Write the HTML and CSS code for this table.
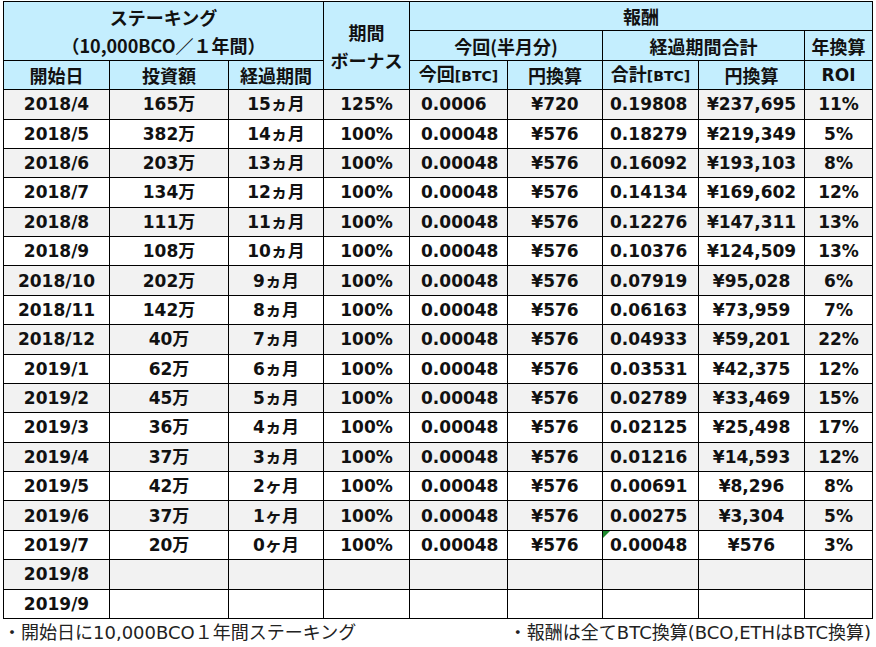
FILE: index.html
```html
<!DOCTYPE html>
<html lang="ja">
<head>
<meta charset="utf-8">
<link rel="stylesheet" href="styles.css">
</head>
<body>
<div class="page">
<table class="grid">
  <colgroup>
    <col class="c1"><col class="c2"><col class="c3"><col class="c4"><col class="c5"><col class="c6"><col class="c7"><col class="c8"><col class="c9">
  </colgroup>
  <thead>
    <tr>
      <th colspan="3" rowspan="2" class="stake"><div>ステーキング</div><div>（10,000BCO／１年間）</div></th>
      <th rowspan="3" class="bonus"><div>期間</div><div>ボーナス</div></th>
      <th colspan="5">報酬</th>
    </tr>
    <tr>
      <th colspan="2">今回(半月分)</th>
      <th colspan="2">経過期間合計</th>
      <th>年換算</th>
    </tr>
    <tr>
      <th>開始日</th>
      <th>投資額</th>
      <th>経過期間</th>
      <th>今回<span class="sm">[BTC]</span></th>
      <th>円換算</th>
      <th>合計<span class="sm">[BTC]</span></th>
      <th>円換算</th>
      <th class="roi">ROI</th>
    </tr>
  </thead>
  <tbody>
    <tr class="g"><td>2018/4</td><td>165万</td><td>15ヵ月</td><td>125%</td><td class="l">0.0006</td><td>¥720</td><td class="t">0.19808</td><td>¥237,695</td><td>11%</td></tr>
    <tr><td>2018/5</td><td>382万</td><td>14ヵ月</td><td>100%</td><td class="l">0.00048</td><td>¥576</td><td class="t">0.18279</td><td>¥219,349</td><td>5%</td></tr>
    <tr class="g"><td>2018/6</td><td>203万</td><td>13ヵ月</td><td>100%</td><td class="l">0.00048</td><td>¥576</td><td class="t">0.16092</td><td>¥193,103</td><td>8%</td></tr>
    <tr><td>2018/7</td><td>134万</td><td>12ヵ月</td><td>100%</td><td class="l">0.00048</td><td>¥576</td><td class="t">0.14134</td><td>¥169,602</td><td>12%</td></tr>
    <tr class="g"><td>2018/8</td><td>111万</td><td>11ヵ月</td><td>100%</td><td class="l">0.00048</td><td>¥576</td><td class="t">0.12276</td><td>¥147,311</td><td>13%</td></tr>
    <tr><td>2018/9</td><td>108万</td><td>10ヵ月</td><td>100%</td><td class="l">0.00048</td><td>¥576</td><td class="t">0.10376</td><td>¥124,509</td><td>13%</td></tr>
    <tr class="g"><td>2018/10</td><td>202万</td><td>9ヵ月</td><td>100%</td><td class="l">0.00048</td><td>¥576</td><td class="t">0.07919</td><td>¥95,028</td><td>6%</td></tr>
    <tr><td>2018/11</td><td>142万</td><td>8ヵ月</td><td>100%</td><td class="l">0.00048</td><td>¥576</td><td class="t">0.06163</td><td>¥73,959</td><td>7%</td></tr>
    <tr class="g"><td>2018/12</td><td>40万</td><td>7ヵ月</td><td>100%</td><td class="l">0.00048</td><td>¥576</td><td class="t">0.04933</td><td>¥59,201</td><td>22%</td></tr>
    <tr><td>2019/1</td><td>62万</td><td>6ヵ月</td><td>100%</td><td class="l">0.00048</td><td>¥576</td><td class="t">0.03531</td><td>¥42,375</td><td>12%</td></tr>
    <tr class="g"><td>2019/2</td><td>45万</td><td>5ヵ月</td><td>100%</td><td class="l">0.00048</td><td>¥576</td><td class="t">0.02789</td><td>¥33,469</td><td>15%</td></tr>
    <tr><td>2019/3</td><td>36万</td><td>4ヵ月</td><td>100%</td><td class="l">0.00048</td><td>¥576</td><td class="t">0.02125</td><td>¥25,498</td><td>17%</td></tr>
    <tr class="g"><td>2019/4</td><td>37万</td><td>3ヵ月</td><td>100%</td><td class="l">0.00048</td><td>¥576</td><td class="t">0.01216</td><td>¥14,593</td><td>12%</td></tr>
    <tr><td>2019/5</td><td>42万</td><td>2ヶ月</td><td>100%</td><td class="l">0.00048</td><td>¥576</td><td class="t">0.00691</td><td>¥8,296</td><td>8%</td></tr>
    <tr class="g"><td>2019/6</td><td>37万</td><td>1ヶ月</td><td>100%</td><td class="l">0.00048</td><td>¥576</td><td class="t">0.00275</td><td>¥3,304</td><td>5%</td></tr>
    <tr><td>2019/7</td><td>20万</td><td>0ヶ月</td><td>100%</td><td class="l">0.00048</td><td>¥576</td><td class="t mark"><span class="tri"></span>0.00048</td><td>¥576</td><td>3%</td></tr>
    <tr class="g"><td>2019/8</td><td></td><td></td><td></td><td></td><td></td><td></td><td></td><td></td></tr>
    <tr><td>2019/9</td><td></td><td></td><td></td><td></td><td></td><td></td><td></td><td></td></tr>
  </tbody>
</table>
<div class="notes">
  <span>・開始日に10,000BCO１年間ステーキング</span>
  <span>・報酬は全てBTC換算(BCO,ETHはBTC換算)</span>
</div>
</div>
</body>
</html>
```
FILE: styles.css
```css
html, body {
  margin: 0;
  padding: 0;
  background: #ffffff;
}
.page {
  width: 876px;
  height: 647px;
  overflow: hidden;
  padding: 1px 0 0 3px;
  box-sizing: border-box;
}
.grid {
  border-collapse: collapse;
  table-layout: fixed;
  width: 869px;
  font-family: "DejaVu Sans", "Noto Sans CJK JP", sans-serif;
  font-weight: bold;
  font-size: 17px;
  color: #111;
}
.c1 { width: 106px; }
.c2 { width: 119px; }
.c3 { width: 95px; }
.c4 { width: 86px; }
.c5 { width: 98px; }
.c6 { width: 95px; }
.c7 { width: 96px; }
.c8 { width: 106px; }
.c9 { width: 68px; }
.grid th, .grid td {
  border: 1px solid #000;
  padding: 0;
  text-align: center;
  vertical-align: middle;
  white-space: nowrap;
  line-height: 20px;
}
.grid tr {
  height: 29.38px;
}
.grid th {
  background: #c4eefe;
  font-family: "Noto Sans CJK JP", "DejaVu Sans", sans-serif;
  font-size: 18px;
  font-weight: bold;
}
.grid th.stake div,
.grid th.bonus div {
  line-height: 28px;
}
.grid th .sm {
  font-family: "DejaVu Sans", sans-serif;
  font-size: 14px;
}
.grid th.roi {
  font-family: "DejaVu Sans", sans-serif;
  font-size: 17px;
}
.grid tr.g td {
  background: #f2f2f2;
}
.grid td.l {
  text-align: left;
  padding-left: 11px;
}
.grid td.t {
  text-align: left;
  padding-left: 7px;
}
.grid td.mark {
  position: relative;
}
.tri {
  position: absolute;
  left: 0;
  top: 0;
  width: 0;
  height: 0;
  border-top: 7px solid #1e8a2e;
  border-right: 7px solid transparent;
}
.notes {
  display: flex;
  justify-content: space-between;
  width: 868px;
  margin-top: 2px;
  font-family: "DejaVu Sans", "Noto Sans CJK JP", sans-serif;
  font-size: 18px;
  line-height: 24px;
  color: #222;
}
```
